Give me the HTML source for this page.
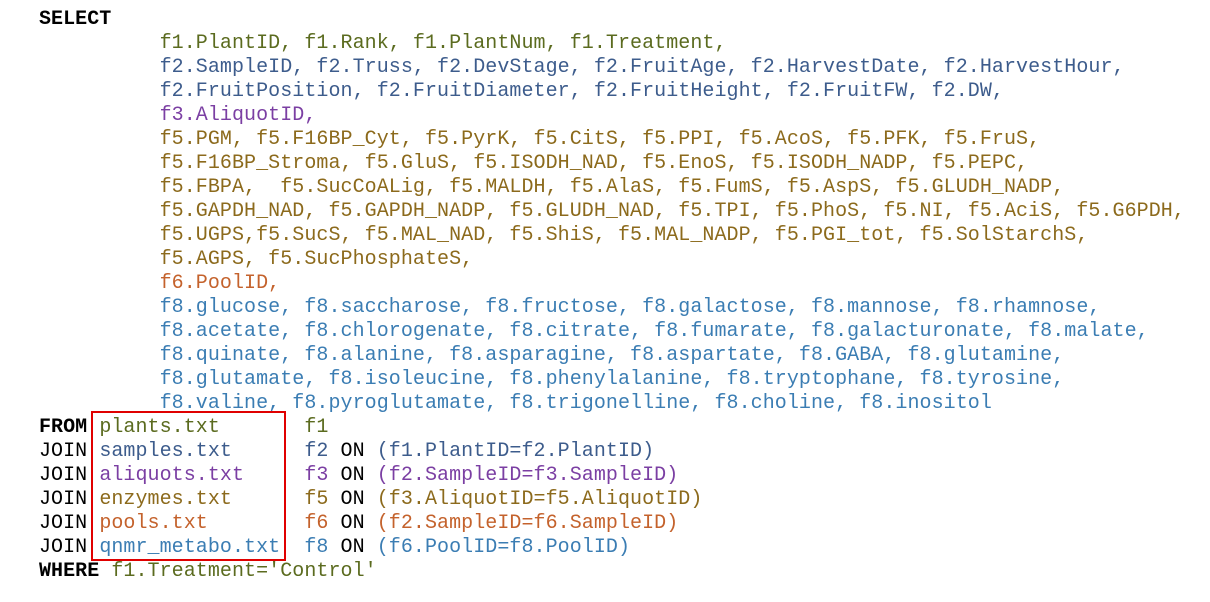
<!DOCTYPE html>
<html><head><style>
html,body{margin:0;padding:0;background:#fff;width:1210px;height:602px;overflow:hidden}
pre{position:absolute;left:39px;top:8px;margin:0;font-family:"Liberation Mono",monospace;font-size:20px;line-height:24px;letter-spacing:0.06px;color:#000}
b{font-weight:bold}
.a{color:#5b6b1f}.b{color:#3d5c8c}.c{color:#7b3fa3}.d{color:#8c6a1c}.e{color:#c4622c}.f{color:#3b7db3}
.box{position:absolute;left:91px;top:411px;width:191px;height:146px;border:2px solid #e00000}
</style></head><body>
<pre><b>SELECT</b>
          <span class="a">f1.PlantID, f1.Rank, f1.PlantNum, f1.Treatment,</span>
          <span class="b">f2.SampleID, f2.Truss, f2.DevStage, f2.FruitAge, f2.HarvestDate, f2.HarvestHour,</span>
          <span class="b">f2.FruitPosition, f2.FruitDiameter, f2.FruitHeight, f2.FruitFW, f2.DW,</span>
          <span class="c">f3.AliquotID,</span>
          <span class="d">f5.PGM, f5.F16BP_Cyt, f5.PyrK, f5.CitS, f5.PPI, f5.AcoS, f5.PFK, f5.FruS,</span>
          <span class="d">f5.F16BP_Stroma, f5.GluS, f5.ISODH_NAD, f5.EnoS, f5.ISODH_NADP, f5.PEPC,</span>
          <span class="d">f5.FBPA,  f5.SucCoALig, f5.MALDH, f5.AlaS, f5.FumS, f5.AspS, f5.GLUDH_NADP,</span>
          <span class="d">f5.GAPDH_NAD, f5.GAPDH_NADP, f5.GLUDH_NAD, f5.TPI, f5.PhoS, f5.NI, f5.AciS, f5.G6PDH,</span>
          <span class="d">f5.UGPS,f5.SucS, f5.MAL_NAD, f5.ShiS, f5.MAL_NADP, f5.PGI_tot, f5.SolStarchS,</span>
          <span class="d">f5.AGPS, f5.SucPhosphateS,</span>
          <span class="e">f6.PoolID,</span>
          <span class="f">f8.glucose, f8.saccharose, f8.fructose, f8.galactose, f8.mannose, f8.rhamnose,</span>
          <span class="f">f8.acetate, f8.chlorogenate, f8.citrate, f8.fumarate, f8.galacturonate, f8.malate,</span>
          <span class="f">f8.quinate, f8.alanine, f8.asparagine, f8.aspartate, f8.GABA, f8.glutamine,</span>
          <span class="f">f8.glutamate, f8.isoleucine, f8.phenylalanine, f8.tryptophane, f8.tyrosine,</span>
          <span class="f">f8.valine, f8.pyroglutamate, f8.trigonelline, f8.choline, f8.inositol</span>
<b>FROM</b> <span class="a">plants.txt</span>       <span class="a">f1</span>
JOIN <span class="b">samples.txt</span>      <span class="b">f2</span> ON <span class="b">(f1.PlantID=f2.PlantID)</span>
JOIN <span class="c">aliquots.txt</span>     <span class="c">f3</span> ON <span class="c">(f2.SampleID=f3.SampleID)</span>
JOIN <span class="d">enzymes.txt</span>      <span class="d">f5</span> ON <span class="d">(f3.AliquotID=f5.AliquotID)</span>
JOIN <span class="e">pools.txt</span>        <span class="e">f6</span> ON <span class="e">(f2.SampleID=f6.SampleID)</span>
JOIN <span class="f">qnmr_metabo.txt</span>  <span class="f">f8</span> ON <span class="f">(f6.PoolID=f8.PoolID)</span>
<b>WHERE</b> <span class="a">f1.Treatment='Control'</span></pre>
<div class="box"></div>
</body></html>
